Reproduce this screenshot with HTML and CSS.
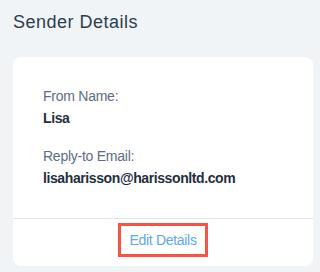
FILE: index.html
```html
<!DOCTYPE html>
<html>
<head>
<meta charset="utf-8">
<link rel="stylesheet" href="styles.css">
</head>
<body>
<div class="page">
  <h1 class="title">Sender Details</h1>
  <div class="card">
    <div class="card-body">
      <div class="field">
        <div class="label">From Name:</div>
        <div class="value">Lisa</div>
      </div>
      <div class="field">
        <div class="label">Reply-to Email:</div>
        <div class="value">lisaharisson@harissonltd.com</div>
      </div>
    </div>
    <div class="card-footer">
      <a class="edit-link">Edit Details</a>
    </div>
  </div>
</div>
</body>
</html>
```
FILE: styles.css
```css
html, body {
  margin: 0;
  padding: 0;
  background: #f0f4f7;
}
body {
  font-family: "Liberation Sans", Arial, sans-serif;
  width: 319px;
  height: 272px;
  overflow: hidden;
}
.page {
  padding: 10px 6px 0 13px;
}
.title {
  margin: 0 0 23px 0;
  font-size: 18px;
  line-height: 24px;
  font-weight: normal;
  color: #2b3d4f;
  letter-spacing: 0.5px;
}
.card {
  background: #ffffff;
  border-radius: 8px;
  width: 300px;
}
.card-body {
  padding: 29px 30px 30px 30px;
  display: flex;
  flex-direction: column;
  gap: 18px;
  border-bottom: 1px solid #dfe5eb;
}
.field {
  display: flex;
  flex-direction: column;
  gap: 2px;
}
.label {
  font-size: 14px;
  line-height: 20px;
  color: #5b6d80;
  letter-spacing: -0.25px;
}
.value {
  font-size: 14px;
  line-height: 20px;
  font-weight: bold;
  color: #1f2f3e;
  letter-spacing: -0.4px;
}
.card-footer {
  display: flex;
  justify-content: center;
  padding: 4px 0 9px 0;
}
.edit-link {
  display: inline-block;
  border: 3px solid #fb5246;
  padding: 0 8px;
  font-size: 14px;
  line-height: 28px;
  color: #5aa8f0;
  letter-spacing: -0.3px;
  cursor: pointer;
}
```
